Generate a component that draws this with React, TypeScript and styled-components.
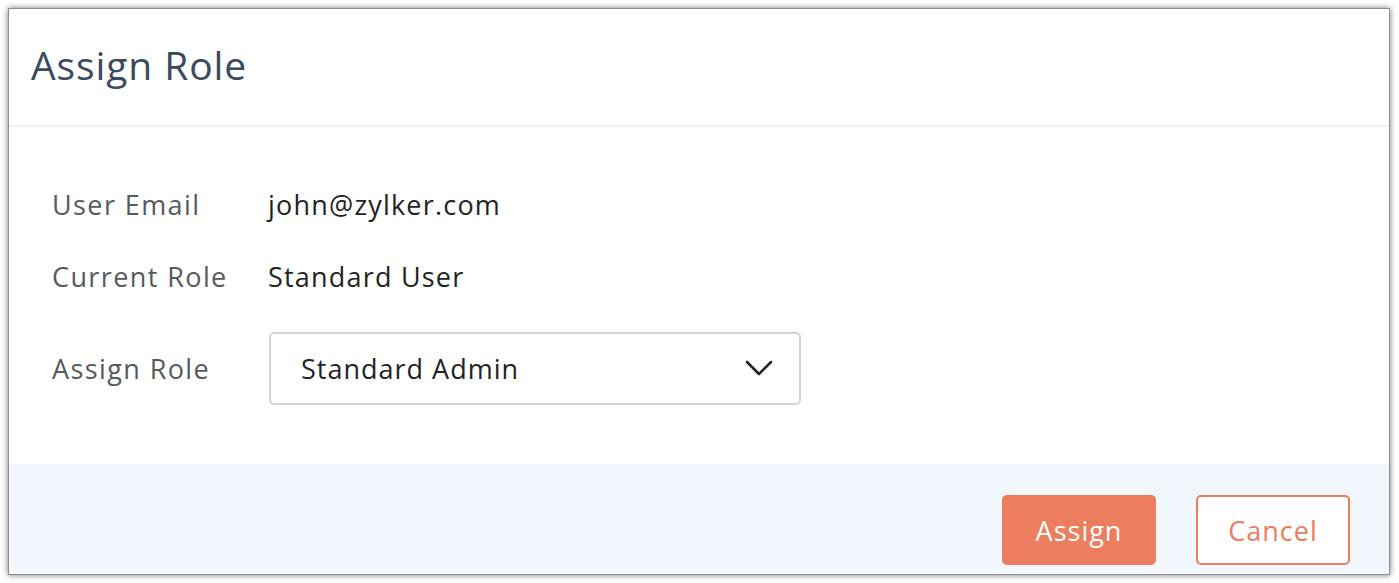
import * as React from "react";
import styled, { createGlobalStyle } from "styled-components";

const Colors = {
    title: "#3d4a5c",
    label: "#555a60",
    value: "#232323",
    divider: "#eef2f6",
    footer: "#f1f7fd",
    border: "#d4d4d4",
    accent: "#ec7d5e",
    white: "#ffffff",
};

const GlobalStyle = createGlobalStyle`
    html, body {
        margin: 0;
        padding: 0;
        background: #ffffff;
        font-family: "Open Sans", "Lato", sans-serif;
    }
`;

const Page = styled.div`
    width: 100%;
    height: 583px;
    padding: 8px;
    box-sizing: border-box;
`;

const Dialog = styled.div`
    width: 1382px;
    height: 567px;
    display: flex;
    flex-direction: column;
    background: ${Colors.white};
    border: 1px solid #8e8e8e;
    box-sizing: border-box;
    box-shadow: 0 0 6px rgba(0, 0, 0, 0.55);
`;

const Header = styled.div`
    height: 118px;
    display: flex;
    align-items: center;
    padding: 0 0 6px 22px;
    border-bottom: 2px solid ${Colors.divider};
    box-sizing: border-box;
`;

const Title = styled.h1`
    margin: 0;
    font-size: 39px;
    font-weight: 400;
    color: ${Colors.title};
    letter-spacing: 0.9px;
`;

const Body = styled.div`
    flex: 1;
    display: grid;
    grid-template-columns: 217px 532px;
    grid-auto-rows: min-content;
    align-items: center;
    padding: 41px 0 0 43px;
`;

const Label = styled.div<{ $height: number }>`
    height: ${(p) => p.$height}px;
    display: flex;
    align-items: center;
    font-size: 27px;
    color: ${Colors.label};
    letter-spacing: 1.4px;
`;

const Value = styled(Label)`
    margin-left: -1px;
    color: ${Colors.value};
    letter-spacing: 1.2px;
`;

const Select = styled.div`
    height: 73px;
    display: flex;
    align-items: center;
    justify-content: space-between;
    padding: 0 26px 0 30px;
    border: 2px solid ${Colors.border};
    border-radius: 5px;
    box-sizing: border-box;
    font-size: 27px;
    color: ${Colors.value};
    letter-spacing: 1px;
`;

const Footer = styled.div`
    height: 110px;
    display: flex;
    justify-content: flex-end;
    align-items: flex-start;
    gap: 40px;
    padding: 31px 39px 0 0;
    background: ${Colors.footer};
    box-sizing: border-box;
`;

const Button = styled.button<{ $primary?: boolean }>`
    width: 154px;
    height: 70px;
    border-radius: 5px;
    border: 2px solid ${Colors.accent};
    background: ${(p) => (p.$primary ? Colors.accent : Colors.white)};
    color: ${(p) => (p.$primary ? Colors.white : Colors.accent)};
    font-family: inherit;
    font-size: 27px;
    letter-spacing: 1px;
    cursor: pointer;
`;

const Chevron = () => (
    <svg width="28" height="18" viewBox="0 0 28 18" fill="none">
        <path
            d="M2 3 L14 15 L26 3"
            stroke="#222"
            strokeWidth="2.6"
            strokeLinecap="round"
            strokeLinejoin="round"
        />
    </svg>
);

export default function App() {
    return (
        <Page>
            <GlobalStyle />
            <Dialog>
                <Header>
                    <Title>Assign Role</Title>
                </Header>
                <Body>
                    <Label $height={72}>User Email</Label>
                    <Value $height={72}>john@zylker.com</Value>
                    <Label $height={72}>Current Role</Label>
                    <Value $height={72}>Standard User</Value>
                    <Label $height={112}>Assign Role</Label>
                    <Select>
                        Standard Admin
                        <Chevron />
                    </Select>
                </Body>
                <Footer>
                    <Button $primary>Assign</Button>
                    <Button>Cancel</Button>
                </Footer>
            </Dialog>
        </Page>
    );
}
